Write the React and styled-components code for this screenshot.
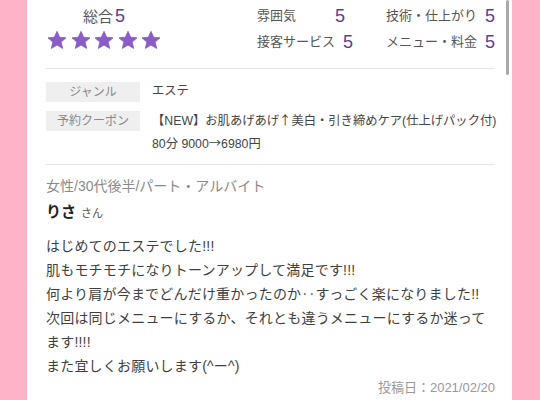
import React from 'react';
import styled, {createGlobalStyle} from 'styled-components';

const GlobalStyle = createGlobalStyle`
  html, body {
    margin: 0;
    padding: 0;
    background: #ffb3c9;
  }
  body {
    font-family: "Liberation Sans", "Noto Sans CJK JP", sans-serif;
    color: #444;
  }
`

const ratings = [
    {label: '雰囲気', score: 5},
    {label: '技術・仕上がり', score: 5},
    {label: '接客サービス', score: 5},
    {label: 'メニュー・料金', score: 5},
];

const bodyLines = [
    'はじめてのエステでした!!!',
    '肌もモチモチになりトーンアップして満足です!!!',
    '何より肩が今までどんだけ重かったのか‥すっごく楽になりました!!',
    '次回は同じメニューにするか、それとも違うメニューにするか迷って',
    'ます!!!!',
    'また宜しくお願いします(^ー^)',
];

const Star = () => (
    <svg width="20" height="20" viewBox="0 0 24 24">
        <path
            d="M12 1.6l3.2 7.1 7.6.7-5.8 5.1 1.8 7.6L12 18.1l-6.8 4 1.8-7.6-5.8-5.1 7.6-.7z"
            fill="#8a5cc6"
            stroke="#8a5cc6"
            strokeWidth="1"
            strokeLinejoin="round"
        />
    </svg>
);

const App = () => {
    return (
        <>
            <GlobalStyle/>
            <Page>
                <Panel>
                    <ScrollThumb/>
                    <Summary>
                        <Overall>
                            <OverallTitle>総合<Score>5</Score></OverallTitle>
                            <Stars>
                                {[0, 1, 2, 3, 4].map(i => <Star key={i}/>)}
                            </Stars>
                        </Overall>
                        <Ratings>
                            {ratings.map((r, i) => (
                                <RatingItem key={r.label} wide={i % 2 === 1}>
                                    <span>{r.label}</span>
                                    <Score>{r.score}</Score>
                                </RatingItem>
                            ))}
                        </Ratings>
                    </Summary>

                    <InfoTable>
                        <InfoRow>
                            <InfoLabel>ジャンル</InfoLabel>
                            <InfoValue>エステ</InfoValue>
                        </InfoRow>
                        <InfoRow>
                            <InfoLabel>予約クーポン</InfoLabel>
                            <InfoValue>
                                <Line>【NEW】お肌あげあげ<Arrow>↑</Arrow>美白・引き締めケア(仕上げパック付)</Line>
                                <Line>80分 9000<Arrow>→</Arrow>6980円</Line>
                            </InfoValue>
                        </InfoRow>
                    </InfoTable>

                    <Review>
                        <Meta>女性/30代後半/パート・アルバイト</Meta>
                        <Name>りさ<Honorific>さん</Honorific></Name>
                        <Body>
                            {bodyLines.map((line, i) => <div key={i}>{line}</div>)}
                        </Body>
                        <PostDate>投稿日：2021/02/20</PostDate>
                    </Review>
                </Panel>
            </Page>
        </>
    );
};

const Page = styled.div`
  display: flex;
  height: 400px;
  padding-left: 27px;
  overflow: hidden;
`
const Panel = styled.div`
  position: relative;
  width: 485px;
  height: 400px;
  box-sizing: border-box;
  background: #fff;
  padding: 0 17px 0 19px;
`
const ScrollThumb = styled.div`
  position: absolute;
  left: 479px;
  top: 0;
  width: 3px;
  height: 75px;
  border-radius: 2px;
  background: #a9a9a9;
`
const Summary = styled.div`
  display: flex;
  justify-content: space-between;
  align-items: flex-start;
  height: 62px;
  padding-top: 6px;
  border-bottom: 1px solid #e6e6e6;
`
const Overall = styled.div`
  display: flex;
  flex-direction: column;
  align-items: center;
  width: 116px;
`
const OverallTitle = styled.div`
  font-size: 15px;
  line-height: 20px;
  color: #555;
`
const Score = styled.span`
  font-family: "Liberation Sans", "Noto Sans", sans-serif;
  font-size: 18px;
  color: #5b3e98;
  margin-left: 2px;
`
const Stars = styled.div`
  display: flex;
  gap: 3.5px;
  margin-top: 3px;
  height: 20px;
`
const Ratings = styled.div`
  display: grid;
  grid-template-columns: 88px 102px;
  column-gap: 48px;
  row-gap: 6px;
`
const RatingItem = styled.div`
  display: flex;
  justify-content: ${(props) => (props.wide ? 'flex-end' : 'space-between')};
  align-items: center;
  gap: 6px;
  font-size: 13px;
  line-height: 20px;
  color: #555;
  white-space: nowrap;
`
const InfoTable = styled.div`
  display: flex;
  flex-direction: column;
  gap: 9px;
  padding: 13px 0 8px;
  border-bottom: 1px solid #e6e6e6;
`
const InfoRow = styled.div`
  display: flex;
  align-items: flex-start;
  gap: 12px;
`
const InfoLabel = styled.div`
  flex: 0 0 94px;
  height: 20px;
  line-height: 20px;
  background: #efefef;
  color: #888;
  font-size: 12px;
  text-align: center;
`
const InfoValue = styled.div`
  font-size: 12.3px;
  margin-top: -1px;
  color: #444;
  white-space: nowrap;
`
const Line = styled.div`
  height: 23px;
  line-height: 23px;
`
const Arrow = styled.span`
  font-family: "Noto Sans CJK JP", sans-serif;
  line-height: 1;
`
const Review = styled.div`
  display: flex;
  flex-direction: column;
  padding-top: 11px;
`
const Meta = styled.div`
  font-size: 14px;
  line-height: 20px;
  color: #8a8a8a;
`
const Name = styled.div`
  margin-top: 6px;
  font-size: 15px;
  font-weight: 700;
  line-height: 20px;
  color: #222;
`
const Honorific = styled.span`
  font-size: 11px;
  font-weight: 400;
  color: #555;
  margin-left: 5px;
`
const Body = styled.div`
  margin-top: 11px;
  font-size: 14px;
  letter-spacing: 0.2px;
  line-height: 24px;
  color: #3f3f3f;
  white-space: nowrap;
`
const PostDate = styled.div`
  align-self: flex-end;
  font-size: 13px;
  line-height: 20px;
  color: #999;
`

export default App;
